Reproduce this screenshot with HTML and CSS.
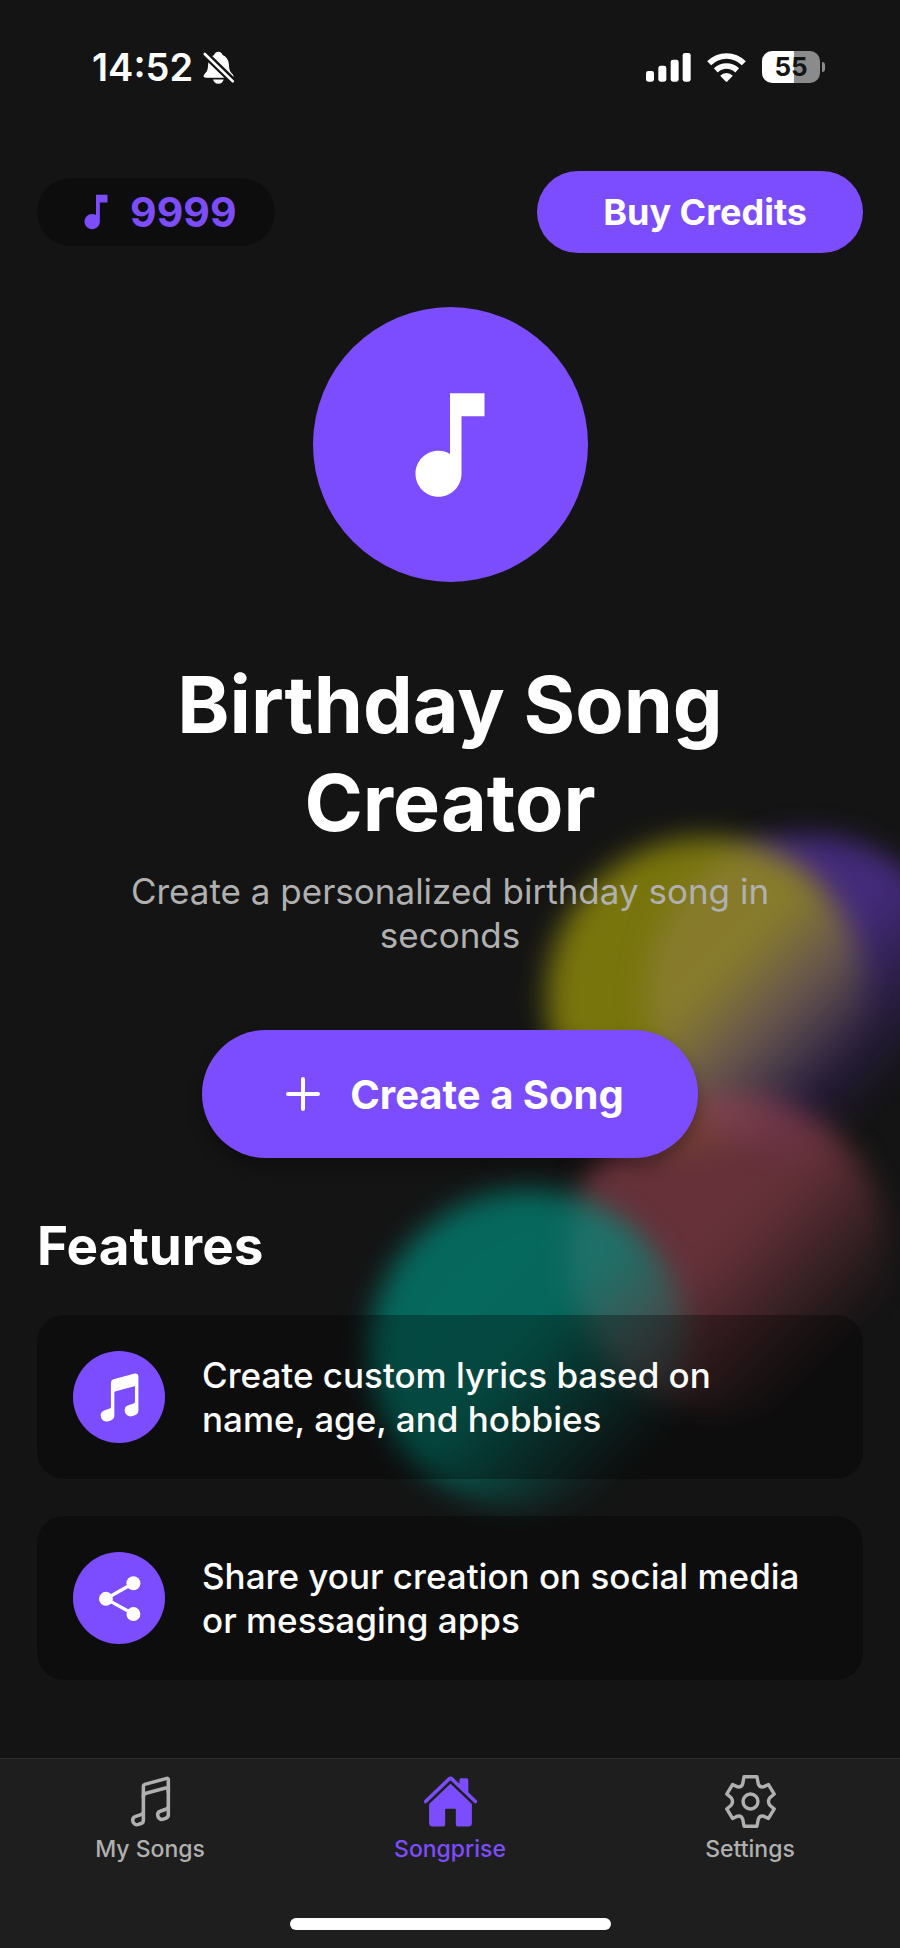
FILE: index.html
```html
<!DOCTYPE html>
<html lang="en">
<head>
<meta charset="utf-8">
<meta name="viewport" content="width=device-width, initial-scale=1">
<title>Songprise</title>
<link rel="stylesheet" href="styles.css">
</head>
<body>
<div class="app">
  <div class="backdrop" aria-hidden="true">
    <div class="blob blob-purple"></div>
    <div class="blob blob-yellow"></div>
    <div class="blob blob-pink"></div>
    <div class="blob blob-teal"></div>
  </div>

  <div class="status">
    <div class="status-left">
      <span class="time">14:52</span>
      <svg class="bell" viewBox="0 0 93 100" role="img" aria-label="Silent mode">
        <defs><mask id="slash"><rect width="93" height="100" fill="#fff"/><path d="M-4 0 96 97" stroke="#000" stroke-width="22"/></mask></defs>
        <g fill="#fff"><path mask="url(#slash)" d="M46 2c7 0 11 5 13 10 12 5 18 15 19 29 1 17 3 21 10 28 7 8 5 12-3 12H9c-9 0-10-6-4-12 8-8 9-13 10-28 1-14 7-24 18-29 2-5 6-10 13-10z"/><path d="M30 86h32c-2 8-8 13-16 13s-14-5-16-13z"/></g>
        <path d="M5 9 90 92" stroke="#fff" stroke-width="8" stroke-linecap="round"/>
      </svg>
    </div>
    <div class="status-right">
      <svg class="signal" viewBox="0 0 135 87" fill="#fff" role="img" aria-label="Signal"><rect y="54" width="24" height="32" rx="7"/><rect x="37" y="38" width="24" height="48" rx="7"/><rect x="74" y="20" width="24" height="66" rx="7"/><rect x="110" width="24" height="86" rx="7"/></svg>
      <svg class="wifi" viewBox="0 0 116 87" role="img" aria-label="Wi-Fi"><g fill="none" stroke="#fff" stroke-width="17"><path d="M6 31Q28 9 58 9t52 22"/><path d="M26 52Q40 39 58 39t32 13"/></g><path fill="#fff" d="M39 68q8-8 19-8t19 8L61 85q-3 3-6 0z"/></svg>
      <div class="battery"><div class="battery-body">55</div><div class="battery-cap"></div></div>
    </div>
  </div>

  <main class="content">
    <header class="top">
      <div class="credits">
        <svg class="credits-icon" viewBox="0 0 24 24" fill="currentColor" aria-hidden="true"><path d="M12 3v10.55c-.59-.34-1.27-.55-2-.55-2.21 0-4 1.79-4 4s1.79 4 4 4 4-1.79 4-4V7h4V3z"/></svg>
        <span>9999</span>
      </div>
      <button class="buy" type="button">Buy Credits</button>
    </header>

    <section class="hero">
      <div class="logo"><svg viewBox="0 0 24 24" fill="currentColor" aria-hidden="true"><path d="M12 3v10.55c-.59-.34-1.27-.55-2-.55-2.21 0-4 1.79-4 4s1.79 4 4 4 4-1.79 4-4V7h4V3z"/></svg></div>
      <h1 class="title">Birthday Song Creator</h1>
      <p class="subtitle">Create a personalized birthday song in seconds</p>
      <button class="create" type="button">
        <svg viewBox="0 0 34 34" fill="none" stroke="currentColor" stroke-width="4" stroke-linecap="round" aria-hidden="true"><path d="M17 2v30M2 17h30"/></svg>
        <span>Create a Song</span>
      </button>
    </section>

    <section class="features">
      <h2 class="heading">Features</h2>
      <ul class="list">
        <li class="card">
          <span class="badge"><svg viewBox="0 0 512 512" fill="currentColor" aria-hidden="true"><path d="M421.84 37.37a25.86 25.86 0 00-22.6-4.46L199.92 86.49A32.3 32.3 0 00176 118v226c0 6.74-4.36 12.56-11.11 14.83l-.12.05-52 18C92.88 383.53 80 402 80 423.91a55.54 55.54 0 0023.23 45.63A54.78 54.78 0 00135.34 480a55.82 55.82 0 0017.75-2.93l.38-.13 21.84-7.94A47.84 47.84 0 00208 423.91v-212c0-7.29 4.77-13.21 12.16-15.07l.21-.06L395 150.14a4 4 0 015 3.86v141.93c0 6.75-4.25 12.38-11.11 14.68l-.25.09-50.89 18.11A49.09 49.09 0 00304 375.92a55.67 55.67 0 0023.23 45.8 54.63 54.63 0 0049.88 7.35l.36-.12 21.84-7.95A47.83 47.83 0 00432 375.92V58a25.74 25.74 0 00-10.16-20.63z"/></svg></span>
          <p class="card-text">Create custom lyrics based on name, age, and hobbies</p>
        </li>
        <li class="card">
          <span class="badge"><svg viewBox="-83 -83 166 166" fill="currentColor" aria-hidden="true"><circle cx="42" cy="-46" r="21"/><circle cx="-41" cy="1" r="21"/><circle cx="42" cy="47" r="21"/><path d="M42-46-41 1 42 47" fill="none" stroke="currentColor" stroke-width="10"/></svg></span>
          <p class="card-text">Share your creation on social media or messaging apps</p>
        </li>
      </ul>
    </section>
  </main>

  <footer class="footer">
    <nav class="tabs">
      <a class="tab" href="#songs">
        <svg viewBox="0 0 512 512" fill="none" stroke="currentColor" stroke-width="32" stroke-linecap="round" stroke-linejoin="round" aria-hidden="true"><path d="M192 218v-6c0-14.84 10-27 24.24-30.59l174.59-46.68A20 20 0 01416 154v22"/><path d="M416 295.94v80c0 13.91-8.93 25.59-22 30l-22 8c-25.9 8.72-52-10.42-52-38h0a33.37 33.37 0 0123-32l51-18.15c13.07-4.4 22-15.94 22-29.85V58a10 10 0 00-12.6-9.61L204 102a16.48 16.48 0 00-12 16v226c0 13.91-8.93 25.6-22 30l-52 18c-13.88 4.68-22 17.22-22 32h0c0 27.58 26.52 46.55 52 38l22-8c13.07-4.4 22-16.08 22-30v-80"/></svg>
        <span>My Songs</span>
      </a>
      <a class="tab tab-active" href="#home" aria-current="page">
        <svg viewBox="0 0 512 512" fill="currentColor" aria-hidden="true"><path d="M261.56 101.28a8 8 0 00-11.06 0L66.4 277.15a8 8 0 00-2.47 5.79L63.9 448a32 32 0 0032 32H192a16 16 0 0016-16V328a8 8 0 018-8h80a8 8 0 018 8v136a16 16 0 0016 16h96.06a32 32 0 0032-32V282.94a8 8 0 00-2.47-5.79z"/><path d="M490.91 244.15l-74.8-71.56V64a16 16 0 00-16-16h-48a16 16 0 00-16 16v32l-57.92-55.38C272.77 35.14 264.71 32 256 32c-8.68 0-16.72 3.14-22.14 8.63l-212.7 203.5c-6.22 6-7 15.87-1.34 22.37A16 16 0 0043 267.56L250.5 69.28a8 8 0 0111.06 0l207.52 198.28a16 16 0 0022.59-.44c6.14-6.36 5.63-16.86-.76-22.97z"/></svg>
        <span>Songprise</span>
      </a>
      <a class="tab" href="#settings">
        <svg viewBox="-84 -84 168 168" fill="none" stroke="currentColor" stroke-width="10" stroke-linejoin="round" aria-hidden="true"><path d="M-19-73H19L23-52Q27-41 38-43L53-50 70-22 57-11Q49 0 57 11L70 22 53 50 38 43Q27 41 23 52L19 73H-19L-23 52Q-27 41-38 43L-53 50-70 22-57 11Q-49 0-57-11L-70-22-53-50-38-43Q-27-41-23-52Z"/><circle r="22"/></svg>
        <span>Settings</span>
      </a>
    </nav>
    <div class="indicator"></div>
  </footer>
</div>
</body>
</html>
```
FILE: styles.css
```css
* { box-sizing: border-box; }

body {
  margin: 0;
  background: #141414;
  color: #fff;
  font-family: Inter, "Liberation Sans", sans-serif;
}

h1, h2, p, ul { margin: 0; padding: 0; }
button { border: 0; font: inherit; color: inherit; cursor: pointer; }
svg { display: block; flex: none; }

.app {
  position: relative;
  display: flex;
  flex-direction: column;
  min-height: 100vh;
  overflow: hidden;
}

/* Blurred colour circles behind the content */
.backdrop { position: absolute; inset: 0; }
.blob {
  position: absolute;
  width: 320px;
  height: 320px;
  border-radius: 50%;
  filter: blur(14px);
}
.blob-purple { top: 835px; right: -66px; background: linear-gradient(135deg, rgba(100, 58, 192, .6) 46%, rgba(100, 58, 192, 0) 78%); }
.blob-yellow { top: 837px; right: 34px; background: linear-gradient(135deg, rgba(164, 158, 10, .7) 48%, rgba(164, 158, 10, 0) 82%); }
.blob-pink { top: 1092px; right: 12px; background: linear-gradient(135deg, rgba(148, 66, 78, .64) 48%, rgba(148, 66, 78, 0) 82%); }
.blob-teal { top: 1190px; right: 211px; background: linear-gradient(135deg, rgba(0, 140, 124, .7) 48%, rgba(0, 140, 124, 0) 84%); }

.status {
  position: relative;
  display: flex;
  justify-content: space-between;
  align-items: center;
  height: 134px;
  padding: 0 75px 0 92px;
}
.status-left, .status-right { display: flex; align-items: center; }
.status-left { gap: 10px; }
.status-right { gap: 16px; }
.time { font-size: 38px; font-weight: 600; line-height: 46px; }
.bell { width: 31px; height: 33px; }
.signal { width: 45px; height: 29px; }
.wifi { width: 39px; height: 29px; }
.battery { display: flex; align-items: center; gap: 2px; }
.battery-body {
  width: 58px;
  height: 32px;
  border-radius: 10px;
  background: linear-gradient(90deg, #fff 55%, #8b8b8b 55%);
  color: #141414;
  font-size: 26px;
  font-weight: 700;
  line-height: 32px;
  text-align: center;
}
.battery-cap { width: 3px; height: 10px; border-radius: 0 4px 4px 0; background: #8b8b8b; }

.content { position: relative; flex: 1; padding: 37px 37px 0; }

.top { display: flex; justify-content: space-between; align-items: center; }
.credits {
  display: flex;
  align-items: center;
  gap: 11px;
  height: 68px;
  padding: 0 38px 0 36px;
  border-radius: 34px;
  background: rgba(0, 0, 0, .3);
  color: #7c4dff;
  font-size: 41px;
  font-weight: 700;
}
.credits-icon { width: 46px; height: 46px; }
.buy {
  height: 82px;
  padding: 0 56px 0 66px;
  border-radius: 41px;
  background: #7c4dff;
  font-size: 36px;
  font-weight: 700;
}

.hero { display: flex; flex-direction: column; align-items: center; text-align: center; }
.logo {
  display: grid;
  place-items: center;
  width: 275px;
  height: 275px;
  margin-top: 54px;
  border-radius: 50%;
  background: #7c4dff;
}
.logo svg { width: 138px; height: 138px; }
.title { max-width: 700px; margin-top: 73px; font-size: 79px; font-weight: 700; line-height: 98px; }
.subtitle { max-width: 720px; margin-top: 18px; color: #b0b0b0; font-size: 35px; line-height: 44px; }
.create {
  display: flex;
  align-items: center;
  gap: 30px;
  height: 128px;
  margin-top: 73px;
  padding: 0 74px 0 84px;
  border-radius: 64px;
  background: #7c4dff;
  box-shadow: 0 9px 16px rgba(0, 0, 0, .3);
  font-size: 40px;
  font-weight: 700;
}
.create svg { width: 34px; height: 34px; }

.heading { margin-top: 55px; font-size: 53px; font-weight: 700; line-height: 66px; }
.list { display: flex; flex-direction: column; gap: 37px; margin-top: 36px; list-style: none; }
.card {
  display: flex;
  align-items: center;
  gap: 37px;
  padding: 36px;
  border-radius: 27px;
  background: rgba(0, 0, 0, .3);
}
.badge {
  display: grid;
  flex: none;
  place-items: center;
  width: 92px;
  height: 92px;
  border-radius: 50%;
  background: #7c4dff;
}
.badge svg { width: 55px; height: 55px; }
.card-text { max-width: 610px; font-size: 35px; font-weight: 500; line-height: 44px; }

.footer {
  position: relative;
  display: flex;
  flex-direction: column;
  justify-content: space-between;
  align-items: center;
  height: 190px;
  padding: 14px 0 18px;
  border-top: 1px solid #2e2e2e;
  background: #1e1e1e;
}
.tabs { display: flex; width: 100%; }
.tab {
  display: flex;
  flex: 1;
  flex-direction: column;
  align-items: center;
  gap: 5px;
  color: #b0b0b0;
  font-size: 23px;
  font-weight: 500;
  line-height: 28px;
  text-decoration: none;
}
.tab-active { color: #7c4dff; }
.tab svg { width: 57px; height: 57px; }
.indicator { width: 321px; height: 12px; border-radius: 6px; background: #fff; }
```
